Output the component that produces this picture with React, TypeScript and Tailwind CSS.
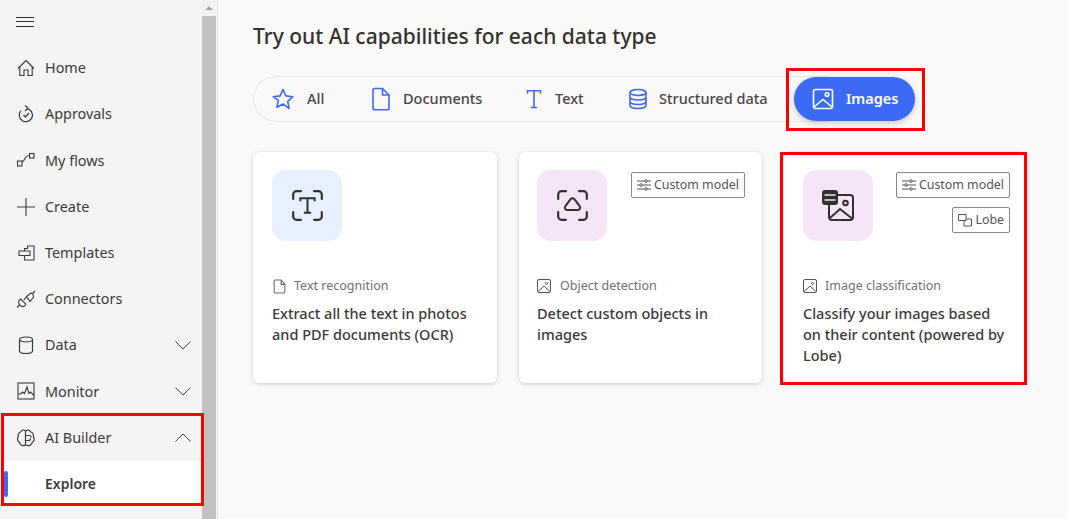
import React from 'react';

type IconProps = { className?: string };

function Svg({ className, children, box = 20, sw = 1 }: IconProps & { children: React.ReactNode; box?: number; sw?: number }) {
  return (
    <svg viewBox={`0 0 ${box} ${box}`} fill="none" stroke="currentColor" strokeWidth={sw} className={className}>
      {children}
    </svg>
  );
}

const HomeIcon = (p: IconProps) => (
  <Svg {...p} sw={1.1}>
    <path d="M2 10.5 10 2.5l8 8M3.8 9v8.5h4.2V12h4v5.500h4.200V9" />
  </Svg>
);
const ApprovalsIcon = (p: IconProps) => (
  <Svg {...p} sw={1.2}>
    <path d="M11 4.6a6.600 6.600 0 1 1-6 2" />
    <path d="M9 1.500 12 4.300 9 7" />
    <path d="m7.500 11 2 2 3.500-4" />
  </Svg>
);
const FlowsIcon = (p: IconProps) => (
  <Svg {...p} sw={1.1}>
    <rect x="1.500" y="11" width="4.500" height="5" />
    <rect x="13.500" y="3.500" width="4.500" height="4.500" />
    <path d="M6 12c2.500-1 3-3.500 4-5 .8-1.200 2-1.500 3.500-1.500" />
  </Svg>
);
const CreateIcon = (p: IconProps) => (
  <Svg {...p} sw={1.1}>
    <path d="M10 1v18M1 10h18" />
  </Svg>
);
const TemplatesIcon = (p: IconProps) => (
  <Svg {...p} sw={1.1}>
    <path d="M11.500 3H18v14H8.500v-4.500H3V8h5.500V5.500h3Z" />
    <path d="M8.500 8h5.500v4.500H8.500" />
  </Svg>
);
const ConnectorsIcon = (p: IconProps) => (
  <Svg {...p} sw={1.1}>
    <path d="m1 18.500 2.500-2.500M16.500 4.500 19 2" />
    <path d="m3 11.500 1.800-1.500 5 5-1.300 2c-1.500 1-3 .500-4.200-.500C3 15.500 2 13 3 11.500Z" />
    <path d="M10.500 7.500 15 4l2 1 .5 3-3.500 4.500Z" />
    <path d="m8 11 2.500-3.500" />
  </Svg>
);
const DataIcon = (p: IconProps) => (
  <Svg {...p} sw={1.2}>
    <ellipse cx="10" cy="4.500" rx="6.500" ry="2.500" />
    <path d="M3.500 4.500v11.500c0 1.400 2.900 2.500 6.500 2.500s6.500-1.100 6.500-2.500V4.500" />
  </Svg>
);
const MonitorIcon = (p: IconProps) => (
  <Svg {...p} sw={1.1}>
    <rect x="2" y="2" width="16" height="16" />
    <path d="M2 13h2.500l2-2 2 1.500L11 6l2 6.500 1.500-1.500 3.500 3.500" />
  </Svg>
);
const BrainIcon = (p: IconProps) => (
  <Svg {...p} sw={1.2}>
    <path d="M9.500 3.200C8.500 1.500 5.500 1.500 4.700 4 2.800 4.400 1.500 6.500 2.300 8.700 .8 10.500 1.300 13.300 3.400 14.300c.1 2.800 3.700 4.600 6.100 2.400Z" />
    <path d="M9.500 3.200c1.500-1.700 4.400-1.500 5.300.8 2 .4 3.300 2.500 2.500 4.700 1.500 1.800 1 4.600-1.100 5.600-.1 2.800-3.500 4.600-6.700 2.400" />
    <path d="M9.500 7.500h3.700a2 2 0 0 1 2 2M9.500 12.500h3a2 2 0 0 0 2-2" />
  </Svg>
);

const StarIcon = (p: IconProps) => (
  <Svg {...p} box={24} sw={1.6}>
    <path d="m12 2.500 2.900 6.400 7 .8-5.200 4.700 1.400 6.900L12 17l-6.100 3.300 1.400-6.900L2.100 9.700l7-.8Z" strokeLinejoin="round" />
  </Svg>
);
const DocIcon = (p: IconProps) => (
  <Svg {...p} box={24} sw={1.6}>
    <path d="M5.800 1.500h7.700L20 8v13a1.800 1.800 0 0 1-1.800 1.800H5.800A1.800 1.800 0 0 1 4 21V3.300a1.800 1.800 0 0 1 1.800-1.800ZM13.500 1.500V8H20" strokeLinejoin="round" />
  </Svg>
);
const TextIcon = (p: IconProps) => (
  <Svg {...p} box={24} sw={1.6}>
    <path d="M5.500 6V3.800h13V6M12 3.800v16.700M9.500 20.500h5" strokeLinecap="round" />
  </Svg>
);
const DbIcon = (p: IconProps) => (
  <Svg {...p} box={24} sw={1.6}>
    <ellipse cx="12" cy="5.500" rx="8" ry="3" />
    <path d="M4 5.500v13c0 1.700 3.600 3 8 3s8-1.300 8-3v-13M4 10c0 1.700 3.600 3 8 3s8-1.300 8-3M4 14.500c0 1.700 3.600 3 8 3s8-1.300 8-3" />
  </Svg>
);
const ImageIcon = (p: IconProps) => (
  <Svg {...p} box={24} sw={1.6}>
    <rect x="2.500" y="2.500" width="19" height="19" rx="2" />
    <circle cx="16" cy="7.500" r="1.800" />
    <path d="m3 20 9-7.500 9 7.500" />
  </Svg>
);

const ScanTextIcon = (p: IconProps) => (
  <Svg {...p} box={30}>
    <path d="M9 2H5a3 3 0 0 0-3 3v4M21 2h4a3 3 0 0 1 3 3v4M9 28H5a3 3 0 0 1-3-3v-4M21 28h4a3 3 0 0 0 3-3v-4" strokeWidth="2" strokeLinecap="round" />
    <path d="M8.500 10.500V8.500h13v2M15 8.500v13M12.500 21.500h5" strokeWidth="1.800" strokeLinecap="round" />
  </Svg>
);
const ScanObjectIcon = (p: IconProps) => (
  <Svg {...p} box={30}>
    <path d="M9 2H5a3 3 0 0 0-3 3v4M21 2h4a3 3 0 0 1 3 3v4M9 28H5a3 3 0 0 1-3-3v-4M21 28h4a3 3 0 0 0 3-3v-4" strokeWidth="2" strokeLinecap="round" />
    <path d="M13.300 9.200c.8-1 2.600-1 3.400 0l4.800 6.300c1 1.400.2 3.500-1.500 3.500h-10c-1.700 0-2.500-2.100-1.500-3.500Z" strokeWidth="1.800" strokeLinejoin="round" />
  </Svg>
);
const ClassifyIcon = (p: IconProps) => (
  <svg viewBox="0 0 32 32" fill="none" stroke="currentColor" className={p.className}>
    <rect x="7" y="5" width="24" height="25" rx="3" strokeWidth="2" />
    <circle cx="23.500" cy="13" r="2.300" strokeWidth="2" />
    <path d="m8 28 10-9 12 9.500" strokeWidth="2" />
    <rect x="0" y="0" width="16" height="15" rx="3" fill="currentColor" stroke="none" />
    <path d="M2.500 5h11M2.500 10h11" stroke="#f5e5f6" strokeWidth="1.600" />
  </svg>
);
const SlidersIcon = (p: IconProps) => (
  <Svg {...p} box={14}>
    <path d="M0 3h7.500M10.500 3H14M0 7h2.500M5.500 7H14M0 11h7.500M10.500 11H14" />
    <circle cx="9" cy="3" r="1.300" />
    <circle cx="4" cy="7" r="1.300" />
    <circle cx="9" cy="11" r="1.300" />
  </Svg>
);
const LobeIcon = (p: IconProps) => (
  <Svg {...p} box={14}>
    <path d="M.5 1.500h7.500v6H.5Z" />
    <path d="M8 6h5.500v7H6V7.500" />
  </Svg>
);
const SmallDocIcon = (p: IconProps) => (
  <Svg {...p} box={14}>
    <path d="M2 2a1 1 0 0 1 1-1h5.500L12 4.800V12a1 1 0 0 1-1 1H3a1 1 0 0 1-1-1ZM8.500 1v4H12" />
  </Svg>
);
const SmallImgIcon = (p: IconProps) => (
  <Svg {...p} box={14}>
    <rect x="0.500" y="0.500" width="13" height="13" rx="1.500" />
    <circle cx="9.500" cy="4.500" r="1" />
    <path d="m1 12.500 6-5.500 6 5.500" />
  </Svg>
);
const Chevron = ({ up }: { up?: boolean }) => (
  <svg viewBox="0 0 16 9" fill="none" stroke="currentColor" className="w-[16px] h-[9px] text-[#444] mr-[11px]">
    <path d={up ? 'M.5 8.500 8 1l7.500 7.500' : 'M.5.500 8 8 15.500.500'} />
  </svg>
);

const navItems = [
  { label: 'Home', Icon: HomeIcon },
  { label: 'Approvals', Icon: ApprovalsIcon },
  { label: 'My flows', Icon: FlowsIcon },
  { label: 'Create', Icon: CreateIcon },
  { label: 'Templates', Icon: TemplatesIcon },
  { label: 'Connectors', Icon: ConnectorsIcon },
  { label: 'Data', Icon: DataIcon, chevron: 'down' },
  { label: 'Monitor', Icon: MonitorIcon, chevron: 'down' },
  { label: 'AI Builder', Icon: BrainIcon, chevron: 'up' },
];

const pills = [
  { label: 'All', Icon: StarIcon, cls: 'w-[98px] pl-[17px] gap-[12px]' },
  { label: 'Documents', Icon: DocIcon, cls: 'w-[152px] pl-[17px] gap-[10px]' },
  { label: 'Text', Icon: TextIcon, cls: 'w-[100px] pl-[18px] gap-[9px]' },
  { label: 'Structured data', Icon: DbIcon, cls: 'w-[193px] pl-[22px] gap-[9px]' },
];

function Badge({ children }: { children: React.ReactNode }) {
  return (
    <div className="h-[26px] px-[5px] flex items-center gap-[3px] border border-[#8a8886] rounded-[2px] text-[12.4px] text-[#555]">
      <span className="contents">{children}</span>
    </div>
  );
}

const CustomBadge = () => (
  <Badge>
    <SlidersIcon className="w-[14px] h-[14px]" />
    Custom model
  </Badge>
);

function Card({ tint, icon, small, caption, desc, badges, className }: {
  tint: string; icon: React.ReactNode; small: React.ReactNode; caption: string; desc: string;
  badges?: React.ReactNode; className: string;
}) {
  return (
    <div className={`h-[231px] bg-white rounded-[6px] shadow-[0_1px_4px_rgba(0,0,0,0.18)] pt-[18px] pr-[17px] ${className}`}>
      <div className="flex justify-between">
        <div className={`w-[70px] h-[71px] rounded-[14px] flex items-center justify-center text-[#323130] ${tint}`}>
          {icon}
        </div>
        <div className="flex flex-col items-end gap-[9px] pt-[2px]">{badges}</div>
      </div>
      <div className="mt-[36px] flex items-center gap-[7px] h-[18px] text-[12.5px] text-[#716f6d]">
        {small}
        {caption}
      </div>
      <p className="mt-[8px] text-[14.5px] leading-[21px] font-medium text-[#3b3a39]">{desc}</p>
    </div>
  );
}

export default function App() {
  return (
    <div className="relative flex w-[1068px] h-[519px] overflow-hidden bg-[#faf9f8] font-['Noto_Sans','Open_Sans',sans-serif]">
      {/* sidebar */}
      <aside className="flex w-[218px] h-full border-r border-[#e1e1e1] bg-[#f4f4f4]">
        <nav className="w-[202px] flex-none">
          <div className="h-[45px] flex items-center pl-[16px] pb-[2px]">
            <div className="w-[18px] h-[10px] border-y border-[#333] flex items-center">
              <div className="w-full h-px bg-[#333]" />
            </div>
          </div>
          {navItems.map(({ label, Icon, chevron }) => (
            <div key={label} className="h-[46.2px] flex items-center pl-[16px] text-[14.4px] text-[#3b3a39]">
              <Icon className="w-[20px] h-[20px] text-[#3a3a3a] flex-none" />
              <span className="ml-[9px] flex-1">{label}</span>
              {chevron && <Chevron up={chevron === 'up'} />}
            </div>
          ))}
          <div className="relative h-[46px] flex items-center pl-[45px] bg-white text-[14px] font-semibold text-[#3b3a39]">
            <div className="absolute left-[4px] top-[10px] w-[4px] h-[26px] rounded-[2px] bg-[#3b6af5]" />
            Explore
          </div>
        </nav>
        <div className="w-[14px] flex-none flex flex-col bg-[#f1f1f1]">
          <div className="h-[16px] flex items-center justify-center">
            <div className="w-0 h-0 border-x-[4px] border-x-transparent border-b-[4px] border-b-[#a3a3a3]" />
          </div>
          <div className="flex-1 bg-[#c1c1c1]" />
        </div>
      </aside>

      {/* main */}
      <main className="flex-1 pl-[35px] pt-[21px]">
        <h1 className="text-[21px] leading-[30px] font-medium text-[#323130]">Try out AI capabilities for each data type</h1>

        <div className="relative mt-[25px] w-[575px] h-[46px] flex items-center border border-[#eae8e6] rounded-l-[23px] border-r-0 text-[14.5px] font-medium text-[#484644]">
          {pills.map(({ label, Icon, cls }) => (
            <div key={label} className={`flex-none flex items-center ${cls}`}>
              <Icon className="w-[24px] h-[24px] text-[#3b6af5]" />
              {label}
            </div>
          ))}
          <div className="absolute left-[540px] top-0 w-[121px] h-[44px] rounded-[22px] bg-[#3b6af5] shadow-[0_2px_6px_rgba(0,0,0,0.2)] flex items-center pl-[17px] gap-[11px] text-[14.5px] font-semibold text-white">
            <ImageIcon className="w-[24px] h-[24px]" />
            Images
          </div>
        </div>

        <div className="mt-[30px] flex gap-[22px]">
          <Card
            className="w-[244px] pl-[19px]"
            tint="bg-[#e6f0ff]"
            icon={<ScanTextIcon className="w-[33px] h-[33px]" />}
            small={<SmallDocIcon className="w-[15px] h-[15px] text-[#6b6a69]" />}
            caption="Text recognition"
            desc="Extract all the text in photos and PDF documents (OCR)"
          />
          <Card
            className="w-[243px] pl-[18px]"
            tint="bg-[#f5e5f6]"
            icon={<ScanObjectIcon className="w-[33px] h-[33px]" />}
            small={<SmallImgIcon className="w-[14px] h-[14px] mr-[2px] text-[#555]" />}
            caption="Object detection"
            desc="Detect custom objects in images"
            badges={<CustomBadge />}
          />
          <Card
            className="w-[243px] pl-[19px]"
            tint="bg-[#f5e5f6]"
            icon={<ClassifyIcon className="w-[32px] h-[32px]" />}
            small={<SmallImgIcon className="w-[14px] h-[14px] mr-px text-[#555]" />}
            caption="Image classification"
            desc="Classify your images based on their content (powered by Lobe)"
            badges={
              <>
                <CustomBadge />
                <Badge>
                  <LobeIcon className="w-[14px] h-[14px]" />
                  Lobe
                </Badge>
              </>
            }
          />
        </div>
      </main>

      {/* red highlight annotations */}
      <div className="absolute left-[1px] top-[413px] w-[203px] h-[93px] border-[3px] border-[#fe0000]" />
      <div className="absolute left-[786px] top-[68px] w-[139px] h-[63px] border-[3px] border-[#fe0000]" />
      <div className="absolute left-[780px] top-[152px] w-[247px] h-[233px] border-[3px] border-[#fe0000]" />
    </div>
  );
}
